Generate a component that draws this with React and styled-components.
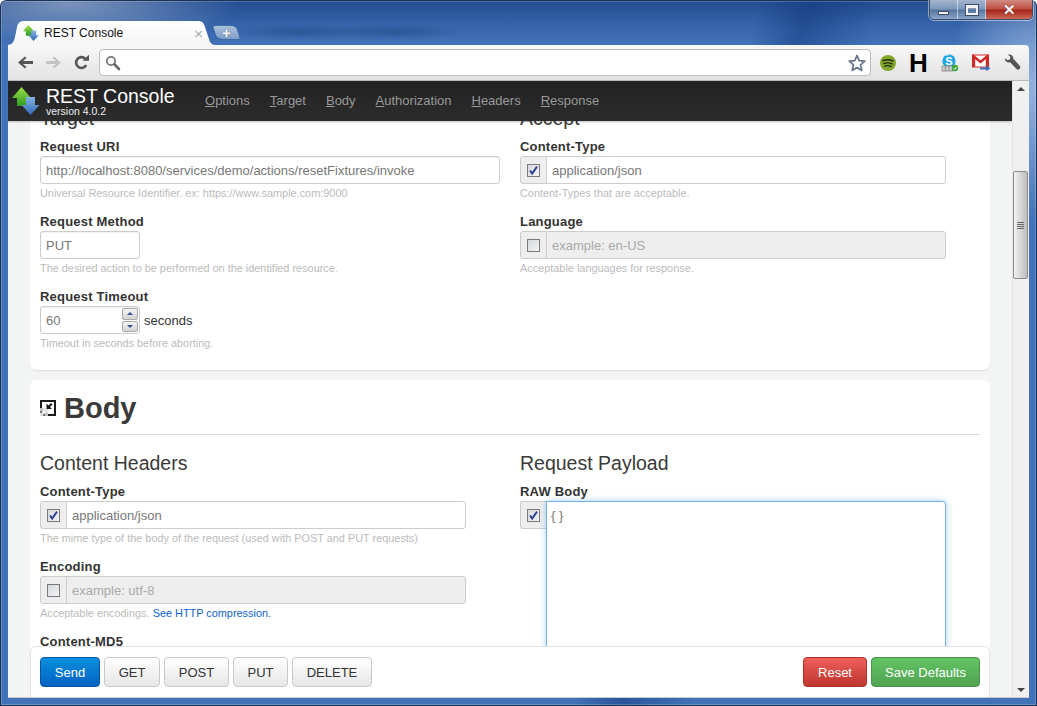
import styled, { createGlobalStyle } from "styled-components";

const GlobalStyle = createGlobalStyle`
  html, body {
    margin: 0;
    padding: 0;
    background: #fff;
    overflow: hidden;
  }
  * {
    box-sizing: border-box;
  }
`;

const SANS = `"Liberation Sans", Arial, sans-serif`;

const BackIcon = () => (
  <svg width="17" height="17" viewBox="0 0 17 17">
    <path d="M1 8.5 L8 2.5 L9.5 4 L6 7 H16 V10 H6 L9.5 13 L8 14.5 Z" fill="#555" />
  </svg>
);

const ForwardIcon = () => (
  <svg width="17" height="17" viewBox="0 0 17 17">
    <path d="M16 8.5 L9 2.5 L7.5 4 L11 7 H1 V10 H11 L7.5 13 L9 14.5 Z" fill="#c4c4c4" />
  </svg>
);

const ReloadIcon = () => (
  <svg width="17" height="17" viewBox="0 0 17 17">
    <path d="M13.2 11.2 A5.4 5.4 0 1 1 12.2 4.6" fill="none" stroke="#555" strokeWidth="2.6" />
    <path d="M9.5 6.8 H16 V0.8 Z" fill="#555" />
  </svg>
);

const SearchIcon = () => (
  <svg width="16" height="16" viewBox="0 0 16 16">
    <circle cx="6" cy="6" r="4.2" fill="#fff" stroke="#777" strokeWidth="1.8" />
    <path d="M9.2 9.2 L14 14" stroke="#666" strokeWidth="2.6" strokeLinecap="round" />
  </svg>
);

const StarIcon = () => (
  <svg width="18" height="18" viewBox="0 0 18 18">
    <path
      d="M9 1.5 L11.2 6.7 L16.8 7.2 L12.5 10.9 L13.8 16.4 L9 13.5 L4.2 16.4 L5.5 10.9 L1.2 7.2 L6.8 6.7 Z"
      fill="#fff"
      stroke="#67738a"
      strokeWidth="1.7"
      strokeLinejoin="round"
    />
  </svg>
);

const SpotifyIcon = () => (
  <svg width="16" height="16" viewBox="0 0 16 16">
    <circle cx="8" cy="8" r="8" fill="#81a82b" />
    <g fill="none" stroke="#25300f" strokeLinecap="round">
      <path d="M3 5.6 Q8 3.8 13 6" strokeWidth="1.6" />
      <path d="M3.6 8.6 Q8 7 12.2 8.9" strokeWidth="1.4" />
      <path d="M4.4 11.2 Q8 10 11.4 11.6" strokeWidth="1.2" />
    </g>
  </svg>
);

const SkypeIcon = () => (
  <svg width="18" height="18" viewBox="0 0 18 18">
    <circle cx="8" cy="7" r="6.6" fill="#22a6e3" />
    <path d="M3 2 a3 3 0 0 1 5 0 z" fill="#8fd6f5" />
    <text x="8" y="11" textAnchor="middle" fontFamily={SANS} fontWeight="700" fontSize="11" fill="#fff">S</text>
    <rect x="1" y="12" width="11" height="5" fill="#c8c8c8" stroke="#8a8a8a" strokeWidth="0.8" />
    <path d="M4.5 12 V17 M8 12 V17" stroke="#8a8a8a" strokeWidth="0.8" />
    <circle cx="14" cy="14" r="3.2" fill="#3aa635" />
    <path d="M12.5 14 L13.8 15.4 L15.6 12.8" fill="none" stroke="#fff" strokeWidth="1" />
  </svg>
);

const GmailIcon = () => (
  <svg width="19" height="17" viewBox="0 0 19 17">
    <rect x="0.5" y="1" width="16" height="12" fill="#fff" />
    <rect x="0.5" y="1" width="16" height="12" fill="none" stroke="#cf2a27" strokeWidth="1" />
    <path d="M2 13 V2.5 L8.5 8 L15 2.5 V13" fill="none" stroke="#cf2a27" strokeWidth="2.4" />
    <path d="M8 13.5 H14 V11.5 L18.5 14.5 L14 17 V15.5 H8 Z" fill="#3a6fc0" />
  </svg>
);

const WrenchIcon = () => (
  <svg width="17" height="17" viewBox="0 0 17 17">
    <path
      d="M1 4.2 L3.6 6.2 L6 5.2 L6.2 2.6 L3.8 0.8 C6.5 -0.2 9.4 1.6 9.3 4.7 L15.8 11.8 C16.6 12.8 16.4 14 15.5 14.9 C14.5 15.9 13.4 15.8 12.5 15 L6.1 8.3 C3.2 9 0.5 7.2 1 4.2 Z"
      fill="#555"
    />
  </svg>
);

// green up arrow sits behind the blue down arrow, as in the app's logo
const LogoIcon = ({ size = 28, gid = "logo" }) => (
  <svg width={size} height={size} viewBox="0 0 28 28">
    <defs>
      <linearGradient id={`${gid}Green`} x1="0" y1="0" x2="0" y2="1">
        <stop offset="0" stopColor="#9be04a" />
        <stop offset="1" stopColor="#2f9a22" />
      </linearGradient>
      <linearGradient id={`${gid}Blue`} x1="0" y1="0" x2="0" y2="1">
        <stop offset="0" stopColor="#86b2e6" />
        <stop offset="1" stopColor="#3169b4" />
      </linearGradient>
    </defs>
    <path d="M9.5 0 L19 11 H14.5 V19 H5 V11 H0 Z" fill={`url(#${gid}Green)`} />
    <path d="M14 10 H23 V18 H27.5 L18.5 28 L9.5 18 H14 Z" fill={`url(#${gid}Blue)`} />
  </svg>
);

const ToggleIcon = () => (
  <svg width="16" height="16" viewBox="0 0 16 16">
    <rect x="1" y="1" width="14" height="14" fill="#fff" stroke="#1a1a1a" strokeWidth="2" />
    <path d="M0 8 H3.5 V11.5 H0 Z M4.5 12.5 H8 V16 H4.5 Z" fill="#c4c4c4" />
    <path d="M0 12.5 H3.5 V16 H0 Z M4.5 8 H8 V11.5 H4.5 Z" fill="#e2e2e2" />
    <path d="M12.5 4.5 L10 7 L12 9 H6.5 V3.5 L8.5 5.5 L11 3 Z" fill="#1a1a1a" />
  </svg>
);

const CheckMark = () => (
  <svg width="11" height="11" viewBox="0 0 11 11">
    <path d="M2 5.5 L4.2 8.6 L9 1.6" fill="none" stroke="#2c3f92" strokeWidth="1.9" />
  </svg>
);

const Window = styled.div`
  position: relative;
  width: 1037px;
  height: 706px;
  display: flex;
  flex-direction: column;
  padding: 0 8px 8px;
  overflow: hidden;
  font-family: ${SANS};
  border-radius: 6px 6px 0 0;
  box-shadow: inset 0 0 0 1px #1b3455, inset 0 0 0 2px rgba(255, 255, 255, 0.2);
  background:
    radial-gradient(170px 40px at 70px 4px, rgba(190, 200, 215, 0.55), transparent),
    radial-gradient(70px 8px at 300px 32px, rgba(20, 55, 110, 0.4), transparent),
    radial-gradient(70px 8px at 395px 32px, rgba(20, 55, 110, 0.4), transparent),
    radial-gradient(90px 130px at 1037px 90px, rgba(170, 195, 230, 0.8), transparent),
    linear-gradient(180deg, rgba(12, 50, 120, 0.6) 0, rgba(12, 50, 120, 0.15) 30px, transparent 46px),
    linear-gradient(105deg, transparent 62%, rgba(10, 50, 120, 0.45) 66%, transparent 72%),
    #4272b8;
`;

const WindowControls = styled.div`
  position: absolute;
  top: 0;
  right: 4px;
  display: flex;
  height: 20px;
  border: 1px solid #3d4f6b;
  border-top: none;
  border-radius: 0 0 5px 5px;
  overflow: hidden;
  box-shadow: 0 0 0 1px rgba(255, 255, 255, 0.45);
`;

const ControlButton = styled.div`
  width: ${(p) => p.$width}px;
  display: flex;
  align-items: center;
  justify-content: center;
  border-right: 1px solid rgba(255, 255, 255, 0.5);
  background: ${(p) =>
    p.$close
      ? "linear-gradient(#d28a80 0%, #bf5044 45%, #a5261c 55%, #cf6a58 100%)"
      : "linear-gradient(#a3b6d0 0%, #7f98bb 45%, #58759e 55%, #8ba6c9 100%)"};

  &:last-child {
    border-right: none;
  }
`;

const MinGlyph = styled.span`
  display: block;
  width: 11px;
  height: 4px;
  margin-top: 6px;
  background: #eef2f6;
  border: 1px solid #3f4f68;
`;

const MaxGlyph = styled.span`
  display: block;
  width: 12px;
  height: 10px;
  background: transparent;
  border: 2px solid #eef2f6;
  border-top-width: 3px;
  box-shadow: 0 0 0 1px #3f4f68;
`;

const CloseGlyph = styled.span`
  color: #f4f4f4;
  font-size: 15px;
  font-weight: 700;
  line-height: 1;
  text-shadow: 0 0 1px #5a1a14;
`;

const TabStrip = styled.div`
  height: 45px;
  flex: none;
  display: flex;
  align-items: flex-end;
`;

const Tab = styled.div`
  width: 209px;
  height: 24px;
  margin-left: -1px;
  display: flex;
  align-items: center;
  gap: 5px;
  padding: 0 13px 0 16px;
  font-size: 12px;
  color: #111;
  background: linear-gradient(#ffffff, #f6f6f6);
  clip-path: path("M0 24 C5 24 7 21 8 16 L10 6 C11 2 13 0 17 0 H191 C195 0 197 2 198 6 L202 18 C203 22 205 24 209 24 Z");
`;

const TabTitle = styled.span`
  flex: 1;
  white-space: nowrap;
`;

const TabClose = styled.span`
  color: #a8a8a8;
  font-size: 15px;
  line-height: 1;
`;

const NewTab = styled.div`
  width: 25px;
  height: 15px;
  margin: 0 0 5px -2px;
  display: flex;
  align-items: center;
  justify-content: center;
  color: #fff;
  font-size: 15px;
  font-weight: 700;
  line-height: 1;
  border: 1px solid #3e6aa4;
  border-radius: 3px 5px 3px 6px;
  transform: skewX(18deg);
  background: linear-gradient(#a9c0de, #7e9dc7);

  span {
    transform: skewX(-18deg);
    text-shadow: 0 0 1px #345;
  }
`;

const Toolbar = styled.div`
  height: 36px;
  flex: none;
  display: flex;
  align-items: center;
  padding: 0 8px 0 3px;
  background: linear-gradient(#f8f8f8, #e2e2e2);
  border-bottom: 1px solid #b9b9b9;
  border-radius: 0 4px 0 0;
`;

const NavButton = styled.div`
  width: 28px;
  display: flex;
  justify-content: center;
  flex: none;
`;

const Omnibox = styled.div`
  width: 772px;
  height: 27px;
  margin-left: 4px;
  display: flex;
  align-items: center;
  justify-content: space-between;
  padding: 0 4px 0 5px;
  background: #fff;
  border: 1px solid #bdbdbd;
  border-radius: 4px;
`;

const ExtensionIcons = styled.div`
  display: flex;
  align-items: center;
  flex: 1;
  margin-left: 9px;
  justify-content: space-between;
`;

const HIcon = styled.span`
  font-size: 26px;
  font-weight: 700;
  line-height: 1;
  color: #000;
`;

const Viewport = styled.div`
  flex: 1;
  min-height: 0;
  display: flex;
  border-bottom: 1px solid #c9ccd0;
`;

const Page = styled.div`
  position: relative;
  flex: 1;
  min-width: 0;
  overflow: hidden;
  padding: 0 22px;
  background: #f3f5f5;
  color: #333;
`;

const Navbar = styled.div`
  position: absolute;
  top: 0;
  left: 0;
  right: 0;
  z-index: 2;
  height: 40px;
  display: flex;
  align-items: center;
  padding-left: 4px;
  background: linear-gradient(#222222, #2c2c2c);
  box-shadow: 0 1px 2px rgba(0, 0, 0, 0.25);
`;

const Brand = styled.div`
  display: flex;
  align-items: center;
  gap: 6px;
  width: 193px;
  flex: none;
`;

const BrandText = styled.div`
  color: #fff;
`;

const BrandName = styled.div`
  font-size: 19.5px;
  line-height: 20px;
`;

const BrandVersion = styled.div`
  font-size: 10.5px;
  line-height: 10px;
  color: #eee;
`;

const NavLinks = styled.div`
  display: flex;
  gap: 20px;
`;

const NavLink = styled.a`
  color: #999;
  font-size: 13px;
  line-height: 18px;
`;

const Card = styled.section`
  background: #fff;
  border-radius: 6px;
  box-shadow: 0 1px 1px rgba(0, 0, 0, 0.1);
  margin-bottom: 10px;
  padding: ${(p) => p.$padding};
`;

const Columns = styled.div`
  display: grid;
  grid-template-columns: 480px 1fr;
`;

const SectionTitle = styled.h3`
  margin: 0 0 5px;
  font-size: 19.5px;
  font-weight: 400;
  line-height: 28px;
  color: #3a3a3a;
`;

const BodyHeading = styled.h1`
  margin: 0 0 14px;
  height: 43px;
  display: flex;
  align-items: center;
  gap: 8px;
  font-size: 29px;
  font-weight: 700;
  line-height: 32px;
  color: #3a3a3a;
  border-bottom: 1px solid #d8d8d8;
  padding-bottom: 10px;
`;

const Field = styled.div`
  margin-bottom: 10px;
`;

const Label = styled.label`
  display: block;
  height: 18px;
  margin-bottom: 1px;
  font-size: 13px;
  font-weight: 700;
  line-height: 20px;
  letter-spacing: 0.2px;
  color: #333;
`;

const Help = styled.div`
  height: 18px;
  font-size: 10.9px;
  line-height: 18px;
  color: #bbb;
  white-space: nowrap;

  a {
    color: #0c64c8;
    text-decoration: none;
  }
`;

const TextInput = styled.div`
  width: ${(p) => p.$width}px;
  height: 28px;
  display: flex;
  align-items: center;
  padding: 0 5px;
  font-size: 13px;
  color: #777;
  background: #fff;
  border: 1px solid #ccc;
  border-radius: 3px;
  box-shadow: inset 0 1px 1px rgba(0, 0, 0, 0.06);
`;

const Row = styled.div`
  display: flex;
  align-items: center;
  gap: 4px;
  font-size: 13px;
  color: #333;
`;

const Spinner = styled.div`
  width: 16px;
  height: 24px;
  margin-left: auto;
  margin-right: -4px;
  display: flex;
  flex-direction: column;
  gap: 1px;
`;

const SpinButton = styled.div`
  flex: 1;
  border: 1px solid #a8a8a8;
  border-radius: 2px;
  display: flex;
  align-items: center;
  justify-content: center;
  background: linear-gradient(#f4f4f4, #d4d4d4);

  &::after {
    content: "";
    width: 0;
    height: 0;
    border-left: 3px solid transparent;
    border-right: 3px solid transparent;
    border-${(p) => (p.$down ? "top" : "bottom")}: 3px solid #3a4f9a;
  }
`;

const InputGroup = styled.div`
  width: 426px;
  height: 28px;
  display: flex;
`;

const Addon = styled.div`
  width: ${(p) => (p.$open ? 26 : 27)}px;
  flex: none;
  height: 28px;
  display: flex;
  align-items: center;
  justify-content: center;
  background: #eee;
  border: 1px solid #ccc;
  border-right-width: ${(p) => (p.$open ? 0 : 1)}px;
  border-radius: 3px 0 0 3px;
`;

const Checkbox = styled.span`
  width: 13px;
  height: 13px;
  display: block;
  background: linear-gradient(135deg, #d4d7dc, #f4f4f6);
  border: 1px solid #7a7a7a;

  svg {
    display: block;
  }
`;

const GroupInput = styled.div`
  flex: 1;
  margin-left: -1px;
  display: flex;
  align-items: center;
  padding: 0 5px;
  font-size: 13px;
  color: ${(p) => (p.$disabled ? "#aaa" : "#777")};
  background: ${(p) => (p.$disabled ? "#eee" : "#fff")};
  border: 1px solid #ccc;
  border-radius: 0 3px 3px 0;
`;

const PayloadGroup = styled.div`
  width: 426px;
  display: flex;
  align-items: flex-start;
`;

const PayloadArea = styled.div`
  flex: 1;
  height: 260px;
  padding: 6px 4px;
  font-size: 13px;
  line-height: 16px;
  color: #777;
  background: #fff;
  border: 1px solid #6fb0ea;
  border-radius: 0 3px 3px 0;
  box-shadow: 0 0 6px rgba(82, 168, 236, 0.5);
`;

const ActionBar = styled.div`
  position: absolute;
  left: 22px;
  right: 22px;
  bottom: 0;
  z-index: 2;
  height: 51px;
  display: flex;
  align-items: flex-start;
  gap: 4px;
  padding: 10px 9px 0;
  background: #fff;
  border: 1px solid #e2e2e2;
  border-bottom: none;
  border-radius: 6px 6px 0 0;
`;

const Spacer = styled.div`
  flex: 1;
`;

const palettes = {
  default: { bg: "linear-gradient(#ffffff, #e6e6e6)", border: "#c9c9c9", color: "#333" },
  primary: { bg: "linear-gradient(#0a8fdc, #0463c4)", border: "#0556a8", color: "#fff" },
  danger: { bg: "linear-gradient(#ee5f5b, #bd362f)", border: "#ac312b", color: "#fff" },
  success: { bg: "linear-gradient(#62c462, #51a351)", border: "#4a944a", color: "#fff" },
};

const Button = styled.button`
  width: ${(p) => p.$width}px;
  height: 30px;
  padding: 0;
  font-family: ${SANS};
  font-size: 13px;
  color: ${(p) => palettes[p.$kind || "default"].color};
  background: ${(p) => palettes[p.$kind || "default"].bg};
  border: 1px solid ${(p) => palettes[p.$kind || "default"].border};
  border-radius: 4px;
`;

const Scrollbar = styled.div`
  position: relative;
  width: 17px;
  flex: none;
  background: #f0f0f0;
  border-left: 1px solid #e4e4e4;
`;

const ScrollArrow = styled.div`
  position: absolute;
  left: 4px;
  ${(p) => (p.$down ? "bottom: 5px;" : "top: 6px;")}
  width: 0;
  height: 0;
  border-left: 4px solid transparent;
  border-right: 4px solid transparent;
  border-${(p) => (p.$down ? "top" : "bottom")}: 4px solid #444;
`;

const ScrollThumb = styled.div`
  position: absolute;
  top: 90px;
  left: 0;
  width: 15px;
  height: 108px;
  display: flex;
  flex-direction: column;
  align-items: center;
  justify-content: center;
  gap: 1px;
  background: linear-gradient(90deg, #f2f2f2, #d2d2d2 60%, #bdbdbd);
  border: 1px solid #8c8c8c;
  border-radius: 2px;

  span {
    display: block;
    width: 7px;
    height: 1px;
    background: #666;
  }
`;

const CardEnd = styled.div`
  height: 8px;
`;

const App = () => {
  return (
    <>
      <GlobalStyle />
      <Window>
        <WindowControls>
          <ControlButton $width={28}><MinGlyph /></ControlButton>
          <ControlButton $width={28}><MaxGlyph /></ControlButton>
          <ControlButton $width={46} $close><CloseGlyph>✕</CloseGlyph></ControlButton>
        </WindowControls>

        <TabStrip>
          <Tab>
            <LogoIcon size={16} gid="tab" />
            <TabTitle>REST Console</TabTitle>
            <TabClose>×</TabClose>
          </Tab>
          <NewTab><span>+</span></NewTab>
        </TabStrip>

        <Toolbar>
          <NavButton><BackIcon /></NavButton>
          <NavButton><ForwardIcon /></NavButton>
          <NavButton><ReloadIcon /></NavButton>
          <Omnibox>
            <SearchIcon />
            <StarIcon />
          </Omnibox>
          <ExtensionIcons>
            <SpotifyIcon />
            <HIcon>H</HIcon>
            <SkypeIcon />
            <GmailIcon />
            <WrenchIcon />
          </ExtensionIcons>
        </Toolbar>

        <Viewport>
          <Page>
            <Navbar>
              <Brand>
                <LogoIcon />
                <BrandText>
                  <BrandName>REST Console</BrandName>
                  <BrandVersion>version 4.0.2</BrandVersion>
                </BrandText>
              </Brand>
              <NavLinks>
                {["Options", "Target", "Body", "Authorization", "Headers", "Response"].map((name) => (
                  <NavLink key={name}>
                    <u>{name[0]}</u>
                    {name.slice(1)}
                  </NavLink>
                ))}
              </NavLinks>
            </Navbar>

            <Card $padding="23px 10px 0">
              <Columns>
                <div>
                  <SectionTitle>Target</SectionTitle>
                  <Field>
                    <Label>Request URI</Label>
                    <TextInput $width={460}>http://localhost:8080/services/demo/actions/resetFixtures/invoke</TextInput>
                    <Help>Universal Resource Identifier. ex: https://www.sample.com:9000</Help>
                  </Field>
                  <Field>
                    <Label>Request Method</Label>
                    <TextInput $width={100}>PUT</TextInput>
                    <Help>The desired action to be performed on the identified resource.</Help>
                  </Field>
                  <Field>
                    <Label>Request Timeout</Label>
                    <Row>
                      <TextInput $width={100}>
                        60
                        <Spinner>
                          <SpinButton />
                          <SpinButton $down />
                        </Spinner>
                      </TextInput>
                      seconds
                    </Row>
                    <Help>Timeout in seconds before aborting.</Help>
                  </Field>
                </div>
                <div>
                  <SectionTitle>Accept</SectionTitle>
                  <Field>
                    <Label>Content-Type</Label>
                    <InputGroup>
                      <Addon><Checkbox><CheckMark /></Checkbox></Addon>
                      <GroupInput>application/json</GroupInput>
                    </InputGroup>
                    <Help>Content-Types that are acceptable.</Help>
                  </Field>
                  <Field>
                    <Label>Language</Label>
                    <InputGroup>
                      <Addon><Checkbox /></Addon>
                      <GroupInput $disabled>example: en-US</GroupInput>
                    </InputGroup>
                    <Help>Acceptable languages for response.</Help>
                  </Field>
                </div>
              </Columns>
              <CardEnd />
            </Card>

            <Card $padding="12px 10px 0">
              <BodyHeading>
                <ToggleIcon />
                Body
              </BodyHeading>
              <Columns>
                <div>
                  <SectionTitle>Content Headers</SectionTitle>
                  <Field>
                    <Label>Content-Type</Label>
                    <InputGroup>
                      <Addon><Checkbox><CheckMark /></Checkbox></Addon>
                      <GroupInput>application/json</GroupInput>
                    </InputGroup>
                    <Help>The mime type of the body of the request (used with POST and PUT requests)</Help>
                  </Field>
                  <Field>
                    <Label>Encoding</Label>
                    <InputGroup>
                      <Addon><Checkbox /></Addon>
                      <GroupInput $disabled>example: utf-8</GroupInput>
                    </InputGroup>
                    <Help>Acceptable encodings. <a>See HTTP compression.</a></Help>
                  </Field>
                  <Field>
                    <Label>Content-MD5</Label>
                  </Field>
                </div>
                <div>
                  <SectionTitle>Request Payload</SectionTitle>
                  <Field>
                    <Label>RAW Body</Label>
                    <PayloadGroup>
                      <Addon $open><Checkbox><CheckMark /></Checkbox></Addon>
                      <PayloadArea>{"{ }"}</PayloadArea>
                    </PayloadGroup>
                  </Field>
                </div>
              </Columns>
            </Card>

            <ActionBar>
              <Button $kind="primary" $width={60}>Send</Button>
              <Button $width={56}>GET</Button>
              <Button $width={65}>POST</Button>
              <Button $width={55}>PUT</Button>
              <Button $width={80}>DELETE</Button>
              <Spacer />
              <Button $kind="danger" $width={64}>Reset</Button>
              <Button $kind="success" $width={109}>Save Defaults</Button>
            </ActionBar>
          </Page>
          <Scrollbar>
            <ScrollArrow />
            <ScrollThumb>
              <span /><span /><span /><span />
            </ScrollThumb>
            <ScrollArrow $down />
          </Scrollbar>
        </Viewport>
      </Window>
    </>
  );
};

export default App;
